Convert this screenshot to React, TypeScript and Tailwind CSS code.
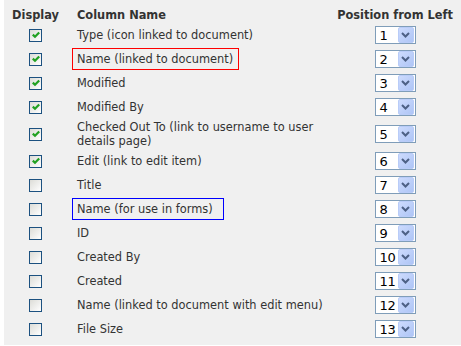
const rows: { label: React.ReactNode; checked: boolean; pos: number; box?: "red" | "blue"; tall?: boolean }[] = [
  { label: "Type (icon linked to document)", checked: true, pos: 1 },
  { label: "Name (linked to document)", checked: true, pos: 2, box: "red" },
  { label: "Modified", checked: true, pos: 3 },
  { label: "Modified By", checked: true, pos: 4 },
  {
    label: (
      <>
        Checked Out To (link to username to user
        <br />
        details page)
      </>
    ),
    checked: true,
    pos: 5,
    tall: true,
  },
  { label: "Edit (link to edit item)", checked: true, pos: 6 },
  { label: "Title", checked: false, pos: 7 },
  { label: "Name (for use in forms)", checked: false, pos: 8, box: "blue" },
  { label: "ID", checked: false, pos: 9 },
  { label: "Created By", checked: false, pos: 10 },
  { label: "Created", checked: false, pos: 11 },
  { label: "Name (linked to document with edit menu)", checked: false, pos: 12 },
  { label: "File Size", checked: false, pos: 13 },
];

function CheckBox({ checked }: { checked: boolean }) {
  return (
    <div className="flex h-[13px] w-[13px] items-center justify-center border border-[#1c5180] bg-gradient-to-br from-[#dcdcd7] to-white">
      {checked && (
        <svg width="8" height="8" viewBox="0 0 8 8">
          <path d="M0.8 3.6 L3 5.8 L7.2 1.4" fill="none" stroke="#21a121" strokeWidth="2.2" />
        </svg>
      )}
    </div>
  );
}

function PosSelect({ value }: { value: number }) {
  return (
    <div className="flex h-[18px] w-[41px] items-center justify-between border border-[#7f9db9] bg-white pl-[4px] pr-px">
      <span className="text-[13px] leading-none tracking-[-0.3px] text-black">{value}</span>
      <div className="flex h-[16px] w-[16px] shrink-0 items-center justify-center rounded-[2px] border border-[#b9ccf8] bg-gradient-to-br from-[#cddbfd] to-[#aec5f6]">
        <svg width="9" height="6" viewBox="0 0 9 6">
          <path d="M1 1 L4.5 4.5 L8 1" fill="none" stroke="#4d6185" strokeWidth="2" />
        </svg>
      </div>
    </div>
  );
}

export default function App() {
  return (
    <div className="h-[346px] w-[461px] bg-white pl-[4px] font-['DejaVu_Sans',Verdana,sans-serif] text-[11.4px] text-[#333]">
      <div className="h-[345px] bg-[#f0f0f0]">
        <div className="flex h-[23px] pt-[8px] font-bold leading-[14px]">
          <div className="w-[63px] text-center">Display</div>
          <div className="w-[266px] pl-[10px]">Column Name</div>
          <div className="w-[124px] text-center">Position from Left</div>
        </div>
        {rows.map((r) => (
          <div key={r.pos} className={`flex items-center ${r.tall ? "h-[30px]" : "h-[24px]"}`}>
            <div className="flex w-[63px] justify-center">
              <CheckBox checked={r.checked} />
            </div>
            <div className="w-[266px] pl-[5px]">
              <div
                className={`inline-block px-[4px] py-[3px] leading-[14px] ${
                  r.box === "red"
                    ? "border border-[#ff0000] pr-[5px]"
                    : r.box === "blue"
                      ? "border border-[#0000ff] pr-[10px]"
                      : "border border-transparent"
                }`}
              >
                {r.label}
              </div>
            </div>
            <div className="flex w-[124px] justify-center">
              <PosSelect value={r.pos} />
            </div>
          </div>
        ))}
      </div>
    </div>
  );
}
